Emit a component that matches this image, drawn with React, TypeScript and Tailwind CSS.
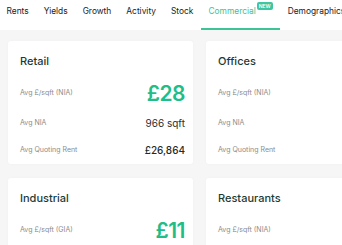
const tabs = ['Rents', 'Yields', 'Growth', 'Activity', 'Stock', 'Commercial', 'Demographics'];

type Row = { label: string; value: string; kind: 'big' | 'plain' | 'bold' };

const cards: { title: string; rows: Row[] }[] = [
  {
    title: 'Retail',
    rows: [
      { label: 'Avg £/sqft (NIA)', value: '£28', kind: 'big' },
      { label: 'Avg NIA', value: '966 sqft', kind: 'plain' },
      { label: 'Avg Quoting Rent', value: '£26,864', kind: 'bold' },
    ],
  },
  {
    title: 'Offices',
    rows: [
      { label: 'Avg £/sqft (NIA)', value: '', kind: 'big' },
      { label: 'Avg NIA', value: '', kind: 'plain' },
      { label: 'Avg Quoting Rent', value: '', kind: 'bold' },
    ],
  },
  {
    title: 'Industrial',
    rows: [
      { label: 'Avg £/sqft (GIA)', value: '£11', kind: 'big' },
      { label: 'Avg GIA', value: '', kind: 'plain' },
    ],
  },
  {
    title: 'Restaurants',
    rows: [
      { label: 'Avg £/sqft (NIA)', value: '', kind: 'big' },
      { label: 'Avg NIA', value: '', kind: 'plain' },
    ],
  },
];

function Card({ title, rows }: { title: string; rows: Row[] }) {
  return (
    <div className="w-[185px] h-[123px] bg-white rounded-[3px] shadow-[0_0_3px_rgba(0,0,0,0.03)] pl-3 pr-2 pt-[13px]">
      <div className="text-[11px] leading-[14px] font-medium text-[#1e3a33]">{title}</div>
      <div className="flex flex-col">
        {rows.map((r, i) => (
          <div
            key={r.label}
            className={
              'flex items-center justify-between ' +
              (i === 0 ? 'mt-[11px] h-[28px]' : i === 1 ? 'h-[32px]' : 'h-[23px]')
            }
          >
            <span className="text-[7px] text-[#8c8c8c]">{r.label}</span>
            {r.kind === 'big' && (
              <span className="text-[21px] leading-none font-semibold tracking-[-0.5px] text-[#1fbd88]">
                {r.value}
              </span>
            )}
            {r.kind === 'plain' && <span className="text-[10px] text-[#2d2d2d]">{r.value}</span>}
            {r.kind === 'bold' && (
              <span className="text-[10px] font-medium text-[#1f2d29]">{r.value}</span>
            )}
          </div>
        ))}
      </div>
    </div>
  );
}

export default function App() {
  return (
    <div className="w-[342px] h-[245px] overflow-hidden bg-[#f6f6f6] font-['Inter',sans-serif]">
      {/* Tab bar */}
      <div className="h-[30px] bg-white flex items-stretch whitespace-nowrap -ml-[1px]">
        {tabs.map((t) => {
          const active = t === 'Commercial';
          return (
            <div
              key={t}
              className={
                'relative flex items-start pt-[5px] px-[7.5px] text-[8.4px] ' +
                (active ? 'text-[#3cc396] border-b-2 border-[#3cc396]' : 'text-[#222]')
              }
            >
              <span>{t}</span>
              {active && (
                <span className="ml-[1px] -mt-[3px] h-[8px] px-[2px] rounded-[2px] bg-[#3dc6a2] text-white text-[5px] leading-[8px] font-semibold">
                  NEW
                </span>
              )}
            </div>
          );
        })}
      </div>

      {/* Cards */}
      <div className="grid grid-cols-[185px_185px] gap-x-[13px] gap-y-[14px] pl-2 pt-[11px]">
        {cards.map((c) => (
          <Card key={c.title} title={c.title} rows={c.rows} />
        ))}
      </div>
    </div>
  );
}
